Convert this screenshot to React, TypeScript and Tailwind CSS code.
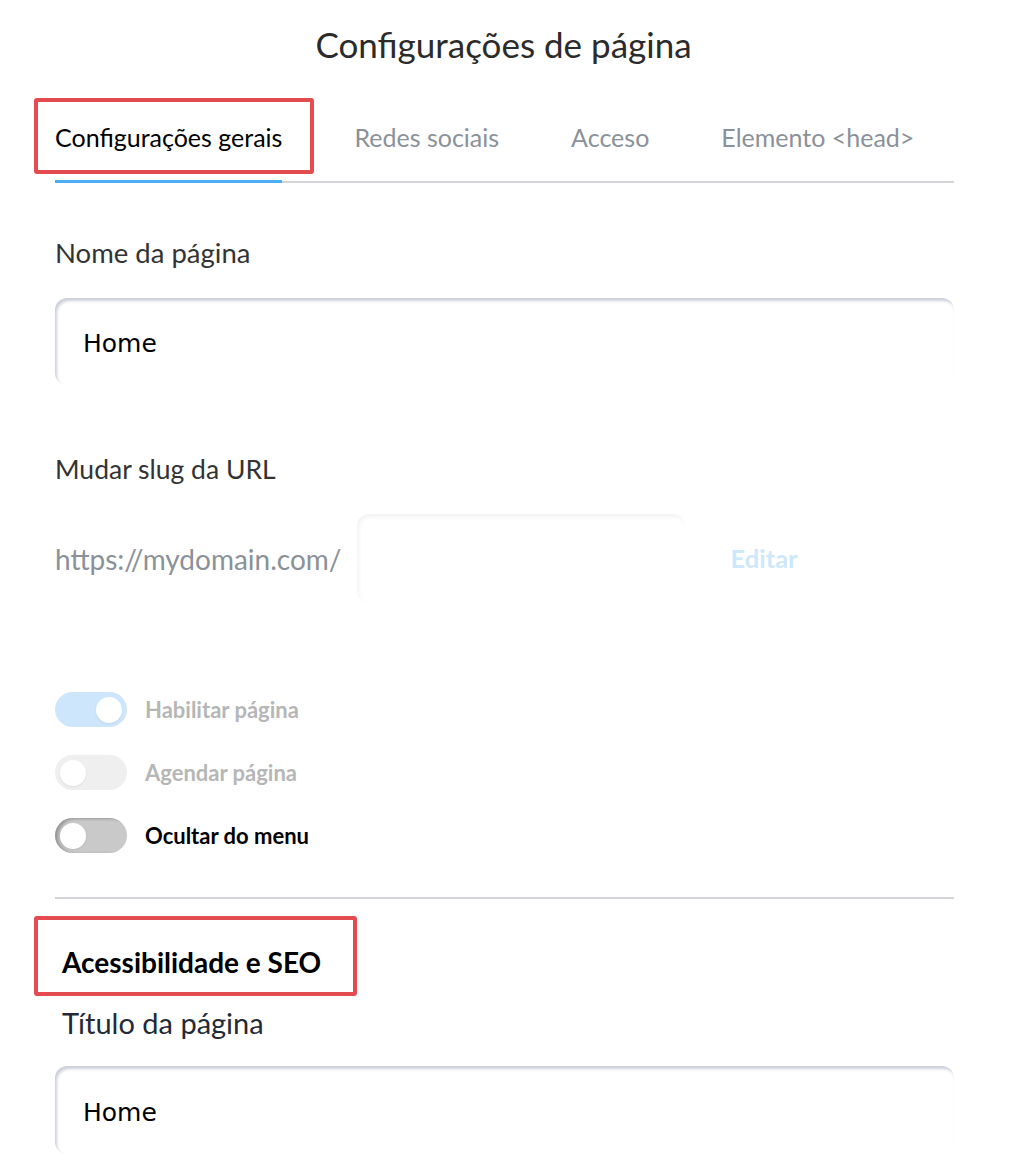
import React from "react";

const tabs = ["Configurações gerais", "Redes sociais", "Acceso", "Elemento <head>"];

const Toggle = ({ state }: { state: "on" | "off" | "idle" }) => {
  const track =
    state === "on"
      ? "bg-[#cde6fb] justify-end"
      : state === "off"
      ? "bg-[#efefef] justify-start"
      : "bg-[#c9c9c9] justify-start shadow-[inset_3px_1px_3px_rgba(0,0,0,0.25)]";
  return (
    <div className={`flex items-center w-[72px] h-[35px] rounded-full px-[5px] ${track}`}>
      <div className="w-[26px] h-[26px] rounded-full bg-white shadow-[0_1px_2px_rgba(0,0,0,0.08)]" />
    </div>
  );
};

export default function App() {
  return (
    <div className="w-[1028px] h-[1164px] bg-white overflow-hidden font-['Lato',sans-serif] text-[#333]">
      <div className="ml-[55px] w-[899px]">
        <h1 className="pt-[22px] text-center text-[35px] leading-[44px] text-[#2b2b2b] pr-[2px]">
          Configurações de página
        </h1>

        {/* tabs */}
        <div className="mt-[52px] flex gap-[72px] border-b-2 border-[#d3d5d9]">
          {tabs.map((t, i) => (
            <div
              key={t}
              className={`relative pb-[24px] text-[25px] leading-[38px] -mb-[2px] ${
                i === 0 ? "text-black border-b-[3px] border-[#4daef5]" : "text-[#8b9199] border-b-[3px] border-transparent"
              }`}
            >
              {t}
              {i === 0 && (
                <div className="absolute left-[-21px] right-[-32px] top-[-20px] bottom-[6px] border-4 border-[#e34b50] rounded-[3px]" />
              )}
            </div>
          ))}
        </div>

        <div className="mt-[54px] text-[27.5px] leading-[32px] text-[#333]">Nome da página</div>
        <div className="mt-[29px] h-[87px] rounded-[12px] shadow-[inset_2px_3px_3px_rgba(160,170,188,0.55)] flex items-center px-[28px] pt-[5px] font-['DejaVu_Sans',sans-serif] text-[25px] text-black">
          Home
        </div>

        <div className="mt-[68px] text-[26.5px] leading-[32px] text-[#333]">Mudar slug da URL</div>
        <div className="mt-[29px] flex items-center">
          <span className="text-[28px] text-[#8b9199]">https://mydomain.com/</span>
          <div className="ml-[15px] w-[328px] h-[89px] rounded-[12px] shadow-[inset_2px_3px_4px_rgba(0,0,0,0.05)]" />
          <span className="ml-[46px] text-[25.5px] font-bold text-[#cde7fb]">Editar</span>
        </div>

        <div className="mt-[89px] flex flex-col gap-[28px]">
          <div className="flex items-center gap-[18px]">
            <Toggle state="on" />
            <span className="text-[22px] font-bold text-[#b6b6b6]">Habilitar página</span>
          </div>
          <div className="flex items-center gap-[18px]">
            <Toggle state="off" />
            <span className="text-[22px] font-bold text-[#b6b6b6]">Agendar página</span>
          </div>
          <div className="flex items-center gap-[18px]">
            <Toggle state="idle" />
            <span className="text-[22px] font-bold text-black">Ocultar do menu</span>
          </div>
        </div>

        <div className="mt-[44px] h-[2px] bg-[#d3d5d9]" />

        <div className="relative mt-[46px] ml-[7px] w-fit text-[28px] leading-[34px] font-bold text-black">
          Acessibilidade e SEO
          <div className="absolute left-[-28px] right-[-36px] top-[-29px] bottom-[-17px] border-4 border-[#e34b50] rounded-[3px]" />
        </div>
        <div className="mt-[28px] ml-[7px] text-[29px] leading-[32px] text-[#232a35]">Título da página</div>
        <div className="mt-[27px] h-[88px] rounded-[12px] shadow-[inset_2px_3px_3px_rgba(160,170,188,0.55)] flex items-center px-[28px] pt-[5px] font-['DejaVu_Sans',sans-serif] text-[25px] text-black">
          Home
        </div>
      </div>
    </div>
  );
}
